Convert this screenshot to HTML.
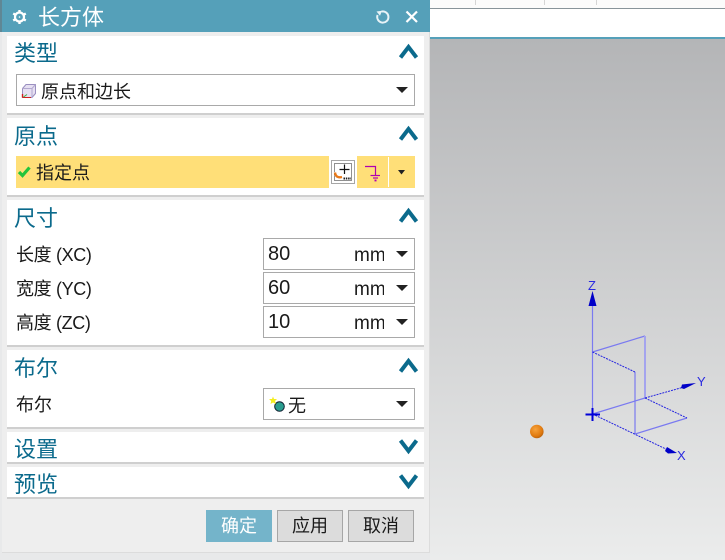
<!DOCTYPE html>
<html>
<head>
<meta charset="utf-8">
<style>
html,body{margin:0;padding:0;}
body{width:725px;height:560px;overflow:hidden;position:relative;background:#e8e9ea;font-family:"Liberation Sans","Noto Sans CJK SC",sans-serif;color:#1a1a1a;}
.abs,.sec,.t,.lbl,.box,.btn{position:absolute;}
#view{position:absolute;left:430px;top:39px;width:295px;height:521px;background:linear-gradient(#b4b5b7,#ebecec);}
#panel{position:absolute;left:2px;top:0;width:427px;height:552px;background:#eeeeee;border-right:1px solid #dcdcdc;border-bottom:1px solid #dcdcdc;}
#title{position:absolute;left:2px;top:0;width:428px;height:32px;background:#55a0b9;}
#title span{position:absolute;left:36px;top:4px;font-size:22px;line-height:28px;color:#fff;white-space:nowrap;}
.sec{left:7px;width:417px;background:#fff;border-bottom:2px solid #cfcfcf;box-sizing:border-box;}
.t{left:14px;font-size:22px;line-height:28px;color:#0b6a8c;white-space:nowrap;}
.lbl{left:16px;font-size:18px;line-height:24px;color:#1a1a1a;white-space:nowrap;}
.dim{letter-spacing:-.35px;}
.box{background:#fff;border:1px solid #a9a9a9;box-sizing:border-box;}
.val{position:absolute;left:4px;top:1px;font-size:20px;line-height:28px;color:#1a1a1a;}
.unit{position:absolute;left:90px;top:3px;width:30px;overflow:hidden;font-size:19px;line-height:28px;color:#1a1a1a;}
.btn{top:510px;width:66px;height:32px;box-sizing:border-box;background:#dcdcdc;border:1px solid #a6a6a6;font-size:18px;line-height:31px;text-align:center;color:#1a1a1a;}
svg{position:absolute;overflow:visible;}
</style>
</head>
<body>
<!-- top right toolbar area -->
<div class="abs" style="left:430px;top:0;width:295px;height:8px;background:#fbfbfb;"></div>
<div class="abs" style="left:430px;top:8px;width:295px;height:1px;background:#88949a;"></div>
<div class="abs" style="left:475px;top:0;width:1px;height:5px;background:#d5d5d5;"></div>
<div class="abs" style="left:544px;top:0;width:1px;height:5px;background:#d5d5d5;"></div>
<div class="abs" style="left:596px;top:0;width:1px;height:5px;background:#d5d5d5;"></div>
<div class="abs" style="left:430px;top:9px;width:295px;height:28px;background:#fff;"></div>
<div class="abs" style="left:430px;top:37px;width:295px;height:2px;background:#55a0b9;"></div>
<div id="view"></div>

<!-- 3D preview -->
<svg style="left:0;top:0;" width="725" height="560" viewBox="0 0 725 560">
  <g fill="none" stroke="#7a7af0" stroke-width="1.2">
    <path d="M592.500 300V414"/>
    <path d="M592.500 352L645 336"/>
    <path d="M645 336V398" stroke-width="2" stroke="#a4a4ee"/>
    <path d="M635 372V434"/>
    <path d="M635 434L687 418"/>
    <path d="M592.500 414L645 398"/>
  </g>
  <g fill="none" stroke="#2222e0" stroke-width="1" stroke-dasharray="2 1">
    <path d="M592.500 352L635 372"/>
    <path d="M645 398L687 418"/>
    <path d="M592.500 414L668 450"/>
    <path d="M645 398L684 387"/>
  </g>
  <path d="M592.500 291L596.500 306H588.500Z" fill="#0000c8"/>
  <path d="M682 384.500L696 383L684 389L681 388Z" fill="#0000c8"/>
  <path d="M677 453L667 447L665 451L668 453.500Z" fill="#0000c8"/>
  <path d="M592.500 408V421M585.500 414.500H600" stroke="#0000d8" stroke-width="2" fill="none"/>
  <g font-family="Liberation Sans" font-size="13" fill="#2a2ae0">
    <text x="588" y="290">Z</text>
    <text x="697" y="386">Y</text>
    <text x="677" y="460">X</text>
  </g>
  <defs><radialGradient id="b" cx=".4" cy=".35" r=".7"><stop offset="0" stop-color="#f7a33c"/><stop offset=".7" stop-color="#e07a10"/><stop offset="1" stop-color="#b55f0c"/></radialGradient></defs>
  <circle cx="536.800" cy="431.500" r="6.800" fill="url(#b)"/>
</svg>

<!-- left edge -->
<div class="abs" style="left:0;top:0;width:2px;height:32px;background:#5f8795;"></div>

<div id="panel"></div>
<div id="title">
  <span>长方体</span>
</div>
<!-- gear -->
<svg style="left:12px;top:9px;" width="16" height="16" viewBox="0 0 16 16">
  <circle cx="7.500" cy="8" r="4.500" fill="none" stroke="#fff" stroke-width="2.200"/>
  <path d="M7.500 1V3.500M7.500 12.500V15M1.200 4.500L3.500 5.800M11.500 10.200L13.800 11.500M1.200 11.500L3.500 10.200M11.500 5.800L13.800 4.500" stroke="#fff" stroke-width="2.400"/>
  <circle cx="7.500" cy="8" r=".8" fill="#fff"/>
</svg>
<!-- reset -->
<svg style="left:375px;top:9px;" width="16" height="16" viewBox="0 0 16 16">
  <path d="M6.500 2.600A5.600 5.600 0 1 1 2.600 6" fill="none" stroke="#e8f3f7" stroke-width="2"/>
  <path d="M1.500 2.500L7 1.800L5 6.800Z" fill="#e8f3f7"/>
</svg>
<!-- close -->
<svg style="left:405px;top:10px;" width="13" height="13" viewBox="0 0 13 13">
  <path d="M1.500 1.500L12 12M12 1.500L1.500 12" stroke="#fff" stroke-width="2.200"/>
</svg>

<!-- sections -->
<div class="sec" style="top:36px;height:79px;"></div>
<div class="sec" style="top:118px;height:79px;"></div>
<div class="sec" style="top:200px;height:147px;"></div>
<div class="sec" style="top:350px;height:79px;"></div>
<div class="sec" style="top:432px;height:32px;"></div>
<div class="sec" style="top:467px;height:32px;"></div>

<div class="t" style="top:40px;">类型</div>
<div class="t" style="top:123px;">原点</div>
<div class="t" style="top:205px;">尺寸</div>
<div class="t" style="top:355px;">布尔</div>
<div class="t" style="top:436px;">设置</div>
<div class="t" style="top:471px;">预览</div>

<!-- chevrons -->
<svg style="left:0;top:0;" width="430" height="500" viewBox="0 0 430 500">
  <g fill="none" stroke="#0b6a8c" stroke-width="4">
    <path d="M400.500 57.500L408.500 47L416.500 57.500"/>
    <path d="M400.500 139.500L408.500 129L416.500 139.500"/>
    <path d="M400.500 221.500L408.500 211L416.500 221.500"/>
    <path d="M400.500 371.500L408.500 361L416.500 371.500"/>
    <path d="M400.500 440.500L408.500 451L416.500 440.500"/>
    <path d="M400.500 475.500L408.500 486L416.500 475.500"/>
  </g>
</svg>

<!-- type dropdown -->
<div class="box" style="left:16px;top:74px;width:399px;height:32px;"></div>
<svg style="left:22px;top:84px;" width="15" height="15" viewBox="0 0 15 15">
  <path d="M.5 4.500L4 .5H13.500V9.500L10 13.500H.5Z" fill="#e6e0f2" stroke="#9a8fc0" stroke-width="1"/>
  <path d="M.5 4.500H10V13.500M10 4.500L13.500 .5" fill="none" stroke="#b3a9d0" stroke-width="1"/>
  <path d="M.5 13.500H9" stroke="#d02020" stroke-width="1"/>
  <path d="M.5 10V13.500" stroke="#d02020" stroke-width="1.400"/>
  <path d="M1.500 13L5 10.500" stroke="#40b040" stroke-width="1"/>
</svg>
<div class="lbl" style="left:41px;top:80px;">原点和边长</div>

<!-- origin row -->
<div class="abs" style="left:16px;top:156px;width:313px;height:32px;background:#ffdf78;"></div>
<svg style="left:18px;top:166px;" width="13" height="12" viewBox="0 0 13 12">
  <path d="M1 6L4.500 9.500L11.500 1.500" fill="none" stroke="#22c43c" stroke-width="3.200"/>
</svg>
<div class="lbl" style="left:36px;top:161px;">指定点</div>
<div class="abs" style="left:331px;top:160px;width:24px;height:24px;box-sizing:border-box;border:1px solid #a6a6a6;background:#fff;"></div>
<svg style="left:331px;top:160px;" width="24" height="24" viewBox="0 0 24 24">
  <rect x="3.500" y="3.500" width="17" height="17" fill="none" stroke="#222" stroke-width="1" stroke-dasharray="1 1"/>
  <path d="M13.500 4.500V14M8.500 9.500H18.500" stroke="#111" stroke-width="1.200"/>
  <path d="M4 12.500C4.500 16.500 7 18 11 17" fill="none" stroke="#e87818" stroke-width="2.400"/>
  <path d="M12.500 18.500H20" stroke="#222" stroke-width="2" stroke-dasharray="1.500 .8"/>
</svg>
<div class="abs" style="left:357px;top:156px;width:58px;height:32px;background:#ffdf78;"></div>
<div class="abs" style="left:388px;top:157px;width:1px;height:30px;background:#fff;"></div>
<svg style="left:365px;top:165px;" width="18" height="18" viewBox="0 0 18 18">
  <path d="M0 1.500H10.500V10" fill="none" stroke="#b000b0" stroke-width="1.200"/>
  <path d="M5.500 10.500H15" stroke="#b000b0" stroke-width="1.200"/>
  <path d="M8 13H13" stroke="#b000b0" stroke-width="1.200"/>
  <path d="M9.500 15.500H11.500" stroke="#b000b0" stroke-width="1.800"/>
</svg>
<svg style="left:398px;top:170px;" width="7" height="5" viewBox="0 0 7 5"><path d="M0 0H7L3.500 4.500Z" fill="#222"/></svg>

<!-- dimensions -->
<div class="lbl dim" style="top:243px;">长度 (XC)</div>
<div class="lbl dim" style="top:277px;">宽度 (YC)</div>
<div class="lbl dim" style="top:311px;">高度 (ZC)</div>
<div class="box" style="left:263px;top:238px;width:152px;height:32px;"><div class="val">80</div><div class="unit">mm</div></div>
<div class="box" style="left:263px;top:272px;width:152px;height:32px;"><div class="val">60</div><div class="unit">mm</div></div>
<div class="box" style="left:263px;top:306px;width:152px;height:32px;"><div class="val">10</div><div class="unit">mm</div></div>

<!-- boolean -->
<div class="lbl" style="top:393px;">布尔</div>
<div class="box" style="left:263px;top:388px;width:152px;height:32px;"></div>
<svg style="left:269px;top:396px;" width="18" height="16" viewBox="0 0 18 16">
  <circle cx="10.500" cy="10.500" r="4.800" fill="#2a9d8f" stroke="#123" stroke-width="1"/>
  <path d="M4 .5L5 3L8 3L6 5L7 8L4 6.500L1.500 8L2.200 5L0 3L3 3Z" fill="#f4ee20"/>
</svg>
<div class="lbl" style="left:288px;top:394px;">无</div>

<!-- dropdown arrows -->
<svg style="left:0;top:0;" width="430" height="430" viewBox="0 0 430 430">
  <g fill="#222">
    <path d="M396 87H408L402 93Z"/>
    <path d="M396 251H408L402 257Z"/>
    <path d="M396 285H408L402 291Z"/>
    <path d="M396 319H408L402 325Z"/>
    <path d="M396 401H408L402 407Z"/>
  </g>
</svg>

<!-- buttons -->
<div class="btn" style="left:206px;background:#74b4ca;border:none;line-height:33px;color:#fff;">确定</div>
<div class="btn" style="left:277px;">应用</div>
<div class="btn" style="left:348px;">取消</div>
</body>
</html>
